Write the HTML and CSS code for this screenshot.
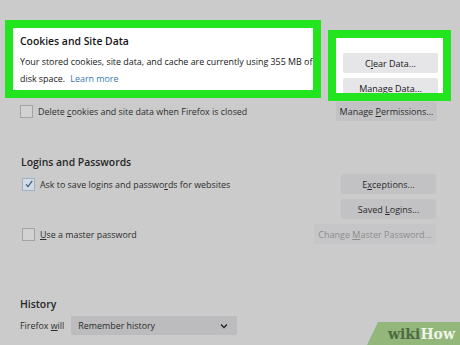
FILE: index.html
```html
<!DOCTYPE html>
<html lang="en">
  <head>
    <meta charset="UTF-8" />
    <meta name="viewport" content="width=device-width, initial-scale=1.0" />
    <title>Privacy Settings</title>
    <link rel="stylesheet" href="styles.css">
  </head>
  <body>
    <div class="page">
      <div class="top">
        <div class="hl info">
          <h3>Cookies and Site Data</h3>
          <p>Your stored cookies, site data, and cache are currently using 355 MB of<br />disk space. <a href="#">Learn more</a></p>
        </div>
        <div class="hl actions">
          <button class="btn light">C<u>l</u>ear Data...</button>
          <button class="btn light"><u>M</u>anage Data...</button>
        </div>
      </div>

      <div class="row cookies-row">
        <label class="check"><span class="box"></span><span>Delete <u>c</u>ookies and site data when Firefox is closed</span></label>
        <button class="btn wide">Manage <u>P</u>ermissions...</button>
      </div>

      <h3 class="section-title logins-title">Logins and Passwords</h3>
      <div class="logins">
        <div class="row">
          <label class="check"><span class="box checked">
            <svg width="10" height="10" viewBox="0 0 10 10"><path d="M2 5.4 L4 7.6 L8.2 1.8" fill="none" stroke="#2f5d86" stroke-width="1.2"/></svg>
          </span><span>Ask to save logins and passwo<u>r</u>ds for websites</span></label>
          <button class="btn">E<u>x</u>ceptions...</button>
        </div>
        <div class="row">
          <span></span>
          <button class="btn">Saved <u>L</u>ogins...</button>
        </div>
        <div class="row">
          <label class="check"><span class="box"></span><span><u>U</u>se a master password</span></label>
          <button class="btn disabled">Change <u>M</u>aster Password...</button>
        </div>
      </div>

      <h3 class="section-title history-title">History</h3>
      <div class="history-row">
        <span>Firefox <u>w</u>ill</span>
        <div class="select">
          <span>Remember history</span>
          <svg width="8" height="6" viewBox="0 0 8 6"><path d="M1 1.5 L4 4.5 L7 1.5" fill="none" stroke="#222" stroke-width="1.3"/></svg>
        </div>
      </div>

      <div class="watermark"><span class="wiki">wiki</span><span class="how">How</span></div>
    </div>
  </body>
</html>
```

FILE: styles.css
```css
body {
  margin: 0;
  background: #cbcbcb;
  font-family: "Open Sans", "Noto Sans", sans-serif;
  color: #2b2b2b;
}
u {
  text-decoration-thickness: 1px;
  text-underline-offset: 1px;
}
.page {
  position: relative;
  width: 460px;
  height: 345px;
  overflow: hidden;
  padding-top: 20px;
  box-sizing: border-box;
  font-size: 8.9px;
}
.top {
  display: flex;
  align-items: flex-start;
  gap: 7px;
  padding-left: 5px;
}
.hl {
  border: 8px solid #22e41f;
  background: #fff;
}
.info {
  width: 300px;
  height: 62px;
  overflow: hidden;
  color: #151515;
}
.info h3 {
  margin: 5px 0 4px 7px;
  font-size: 10.4px;
  font-weight: 600;
  line-height: 16px;
}
.info p {
  margin: 0 0 0 7px;
  line-height: 17px;
  white-space: nowrap;
}
.info a {
  color: #3879b4;
  text-decoration: none;
  margin-left: 3px;
}
.actions {
  margin-top: 10px;
  width: 123px;
  height: 71px;
  box-sizing: border-box;
  overflow: hidden;
  display: flex;
  flex-direction: column;
  gap: 5px;
  padding: 15px 0 0 7px;
}
.btn {
  width: 95px;
  height: 20px;
  flex: none;
  border: none;
  border-radius: 2px;
  background: #c2c2c4;
  color: #2b2b2b;
  font-family: inherit;
  font-size: 9px;
  padding: 0;
}
.btn.light {
  background: #e6e6e9;
  color: #151515;
}
.btn.wide {
  width: 101px;
  height: 19px;
}
.btn.disabled {
  width: 122px;
  color: #8c8c8c;
  background: #c6c6c8;
}
.row {
  display: flex;
  align-items: center;
  justify-content: space-between;
}
.cookies-row {
  margin-top: 1px;
  padding: 0 23px 0 20px;
}
.check {
  display: flex;
  align-items: center;
  gap: 5px;
}
.box {
  width: 11px;
  height: 11px;
  border: 1px solid #a3a3a3;
  background: #d2d2d2;
  display: flex;
  align-items: center;
  justify-content: center;
}
.box.checked {
  background: #d3dbe3;
  border-color: #9fb0c0;
}
.section-title {
  margin: 0;
  padding-left: 21px;
  font-size: 10.4px;
  font-weight: 600;
  line-height: 16px;
  color: #262626;
}
.logins-title {
  margin-top: 33px;
}
.logins {
  margin-top: 4px;
  padding: 0 24px 0 22px;
  display: flex;
  flex-direction: column;
  gap: 5px;
}
.history-title {
  margin-top: 52px;
  padding-left: 20px;
}
.history-row {
  margin-top: 4px;
  padding-left: 20px;
  display: flex;
  align-items: center;
  gap: 7px;
}
.select {
  width: 166px;
  height: 19px;
  box-sizing: border-box;
  background: #bcbcbe;
  border-radius: 2px;
  display: flex;
  align-items: center;
  justify-content: space-between;
  padding: 0 9px 0 7px;
}
.watermark {
  position: absolute;
  right: 0;
  bottom: 0;
  width: 93px;
  height: 23px;
  background: #93b67b;
  clip-path: polygon(11px 0, 100% 0, 100% 100%, 0 100%);
  font-family: "DejaVu Serif", serif;
  font-weight: bold;
  font-size: 14px;
  line-height: 24px;
  text-align: right;
  padding-right: 5px;
  box-sizing: border-box;
}
.wiki {
  color: #4f6b43;
}
.how {
  color: #eef4e6;
}
```
